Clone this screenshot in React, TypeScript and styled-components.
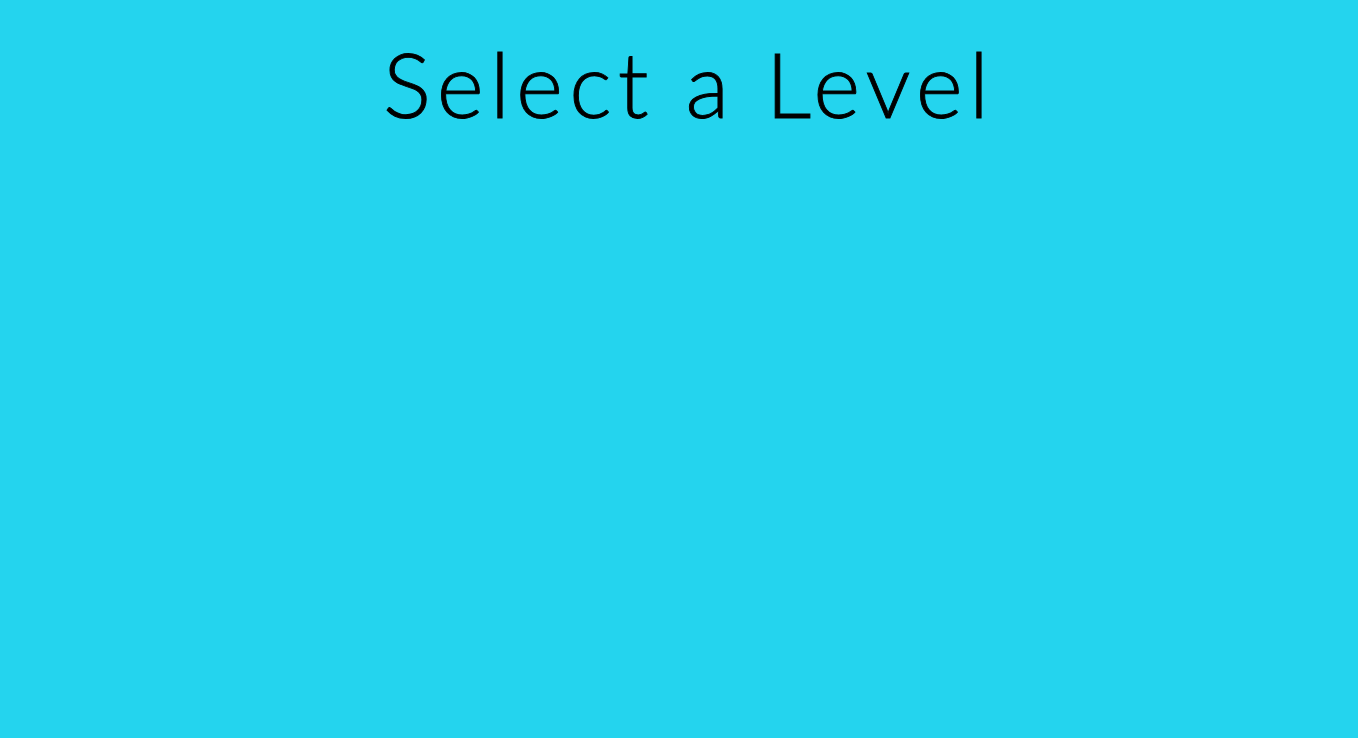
import React from "react";
import styled, { createGlobalStyle } from "styled-components";

const Global = createGlobalStyle`
  html, body { margin: 0; padding: 0; background: #24d4ee; }
  body { min-height: 738px; }
`;

const Screen = styled.main`
  min-height: 738px;
  background: #24d4ee;
  display: flex;
  flex-direction: column;
  align-items: center;
  padding-top: 38px;
  box-sizing: border-box;
`;

const Title = styled.h1`
  margin: 0;
  padding-left: 20px;
  font-family: Lato, "Open Sans", sans-serif;
  font-weight: 300;
  font-size: 90px;
  line-height: 1;
  color: #000;
  letter-spacing: 6.2px;
  -webkit-text-stroke: 0.9px #000;
`;

export default function App() {
  return (
    <>
      <Global />
      <Screen>
        <Title>Select a Level</Title>
      </Screen>
    </>
  );
}
